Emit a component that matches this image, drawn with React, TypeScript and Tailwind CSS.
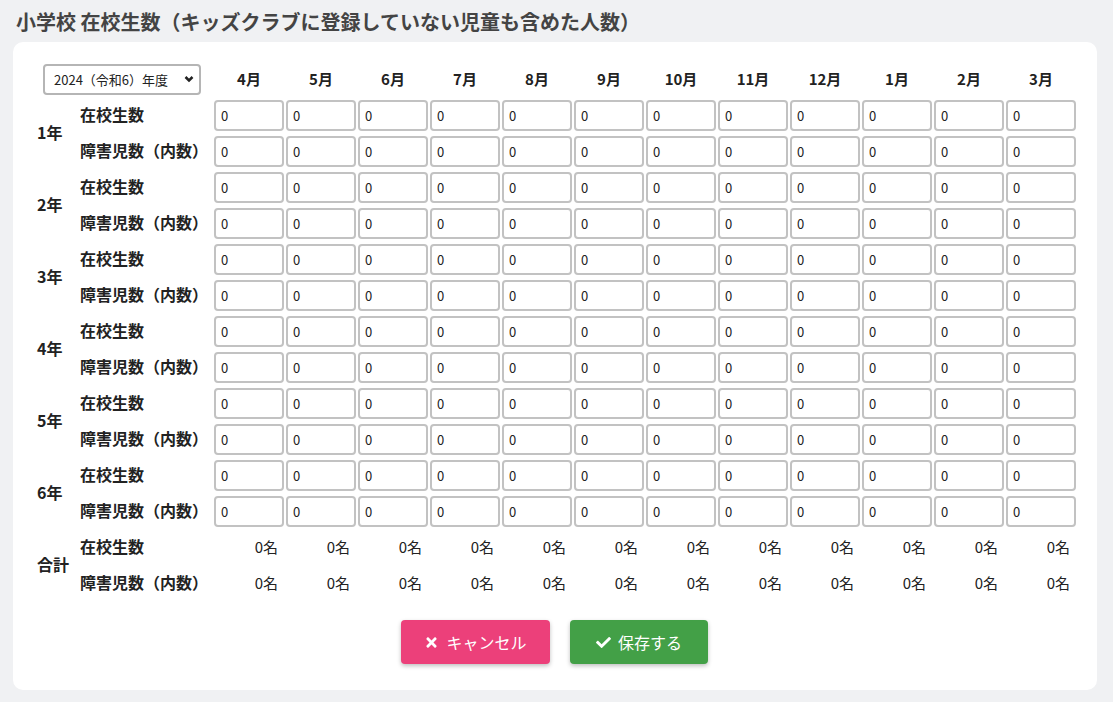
import React from "react";
import { FaTimes, FaCheck } from "react-icons/fa";

const months = ["4月", "5月", "6月", "7月", "8月", "9月", "10月", "11月", "12月", "1月", "2月", "3月"];
const grades = ["1年", "2年", "3年", "4年", "5年", "6年"];

function Inputs() {
  return (
    <>
      {months.map((m) => (
        <input
          key={m}
          defaultValue="0"
          className="h-[31px] w-full rounded-[4px] border-2 border-[#c2c2c2] bg-white pl-[5px] text-[13px] text-[#222] outline-none"
        />
      ))}
    </>
  );
}

const lbl = "flex items-center whitespace-nowrap pb-[3px] text-[16px] font-bold";

export default function App() {
  return (
    <div
      className="min-h-[702px] bg-[#f0f1f3] px-[13px] pb-[12px]"
      style={{ fontFamily: '"Noto Sans CJK JP", "Noto Sans", sans-serif' }}
    >
      <div className="h-[42px] pl-[3px] pt-[8px] text-[20px] font-bold leading-[28px] text-[#444]">
        小学校 在校生数（キッズクラブに登録していない児童も含めた人数）
      </div>
      <div className="w-[1084px] rounded-[10px] bg-white pb-[26px] pl-[24px] pr-[21px] pt-[22px]">
        <div className="grid grid-cols-[41px_132px_repeat(12,70px)] auto-rows-[31px] gap-x-[2px] gap-y-[5px] text-[15px] text-[#222]">
          <div className="col-span-2 flex items-center">
            <div className="relative ml-[6px] h-[31px] w-[158px]">
              <select className="h-full w-full appearance-none rounded-[4px] border-2 border-[#b5b5b5] bg-white pl-[9px] text-[13px] text-[#222] outline-none">
                <option>2024（令和6）年度</option>
              </select>
              <svg
                className="pointer-events-none absolute right-[7px] top-[11px]"
                width="10"
                height="8"
                viewBox="0 0 10 8"
              >
                <path d="M1.5 2 L5 5.5 L8.5 2" fill="none" stroke="#222" strokeWidth="2.5" />
              </svg>
            </div>
          </div>
          {months.map((m) => (
            <div key={m} className="flex items-center justify-center font-bold">
              {m}
            </div>
          ))}
          {grades.map((g) => (
            <React.Fragment key={g}>
              <div className={`row-span-2 ${lbl}`}>{g}</div>
              <div className={lbl}>在校生数</div>
              <Inputs />
              <div className={lbl}>障害児数（内数）</div>
              <Inputs />
            </React.Fragment>
          ))}
          <div className={`row-span-2 ${lbl}`}>合計</div>
          <div className={lbl}>在校生数</div>
          {months.map((m) => (
            <div key={m} className="flex items-center justify-end pr-[6px]">
              0名
            </div>
          ))}
          <div className={lbl}>障害児数（内数）</div>
          {months.map((m) => (
            <div key={m} className="flex items-center justify-end pr-[6px]">
              0名
            </div>
          ))}
        </div>
        <div className="mt-[21px] flex justify-center gap-[20px] pr-[4px]">
          <button className="flex h-[44px] w-[149px] items-center justify-center gap-[7px] rounded-[4px] bg-[#ec407a] text-[16px] text-white shadow-[0_2px_4px_rgba(0,0,0,0.25)]">
            <FaTimes className="h-[15px] w-[15px]" />
            キャンセル
          </button>
          <button className="flex h-[44px] w-[138px] items-center justify-center gap-[7px] rounded-[4px] bg-[#43a047] text-[16px] text-white shadow-[0_2px_4px_rgba(0,0,0,0.25)]">
            <FaCheck className="h-[15px] w-[15px]" />
            保存する
          </button>
        </div>
      </div>
    </div>
  );
}
